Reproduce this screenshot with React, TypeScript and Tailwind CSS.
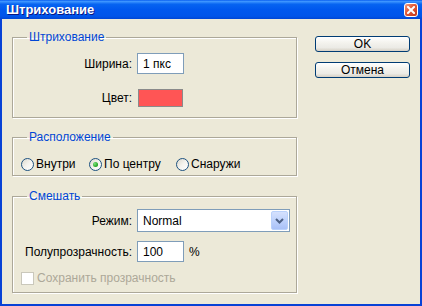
import React from "react"

// XP-style "Stroke" dialog (Photoshop, RU locale)

const ui = "font-['Liberation_Sans',Arial,sans-serif] text-[12px] leading-[14px]"

function Group({ title, className, children }: { title: string; className: string; children: React.ReactNode }) {
  return (
    <fieldset
      className={`border border-[#ACA899] shadow-[inset_1px_1px_0_#fff,1px_1px_0_#fff] ${className}`}
    >
      <legend className="ml-[14px] px-[2px] text-[#0046D5] leading-[14px]">{title}</legend>
      {children}
    </fieldset>
  )
}

function XpButton({ label }: { label: string }) {
  return (
    <button className="w-[95px] h-[16px] rounded-[3px] border border-[#003C74] bg-[linear-gradient(to_bottom,#ffffff_0%,#F4F3EE_40%,#ECEBE6_75%,#D6D0C5_100%)] text-black leading-[14px] text-center">
      {label}
    </button>
  )
}

function Radio({ label, checked }: { label: string; checked?: boolean }) {
  return (
    <div className="flex items-center">
      <span className="w-[13px] h-[13px] rounded-full border border-[#1C5180] bg-[linear-gradient(135deg,#DCD9CD_0%,#F4F3EE_50%,#ffffff_100%)] flex items-center justify-center">
        {checked && (
          <span className="w-[5px] h-[5px] rounded-full bg-[radial-gradient(circle_at_35%_35%,#7BE27B_0%,#21A121_70%)]" />
        )}
      </span>
      <span className="ml-[2px]">{label}</span>
    </div>
  )
}

export default function App() {
  return (
    <div className={`w-[422px] h-[306px] flex flex-col bg-[#0842D6] ${ui} text-black`}>
      {/* title bar */}
      <div className="h-[19px] flex items-center justify-between bg-[linear-gradient(to_bottom,#0A5FF0_0%,#3D95FF_8%,#0764F1_22%,#0058EE_50%,#0055EA_85%,#0046D5_100%)]">
        <span className="ml-[6px] text-white font-bold text-[13px] leading-[15px] [text-shadow:1px_1px_0_#0A1883]">
          Штрихование
        </span>
        <div className="mr-[4px] w-[14px] h-[14px] rounded-[3px] border border-white bg-[linear-gradient(135deg,#F0A187_0%,#E35D3B_40%,#C4361A_100%)] flex items-center justify-center">
          <svg width="8" height="8" viewBox="0 0 8 8">
            <path d="M1 1 L7 7 M7 1 L1 7" stroke="#fff" strokeWidth="2" strokeLinecap="square" />
          </svg>
        </div>
      </div>

      {/* body */}
      <div className="flex-1 mx-[2px] mb-[2px] bg-[#ECE9D8] flex pl-[10px] pt-[11px]">
        <div className="w-[285px] flex flex-col">
          <Group title="Штрихование" className="h-[88px]">
            <div className="grid grid-cols-[119px_auto] gap-x-[5px] items-center mt-[9px]">
              <span className="text-right">Ширина:</span>
              <div className="w-[47px] h-[21px] border border-[#7F9DB9] bg-white pl-[5px] flex items-center">1 пкс</div>
              <span className="text-right mt-[15px]">Цвет:</span>
              <div className="mt-[15px] ml-[1px] w-[45px] h-[18px] border border-[#8A8A8A] bg-[#FF5555]" />
            </div>
          </Group>

          <Group title="Расположение" className="h-[46px] mt-[12px]">
            <div className="flex mt-[13px] ml-[8px]">
              <div className="w-[68px]"><Radio label="Внутри" /></div>
              <div className="w-[87px]"><Radio label="По центру" checked /></div>
              <Radio label="Снаружи" />
            </div>
          </Group>

          <Group title="Смешать" className="h-[104px] mt-[13px]">
            <div className="grid grid-cols-[119px_auto] gap-x-[5px] items-center mt-[6px]">
              <span className="text-right">Режим:</span>
              <div className="w-[153px] h-[23px] border border-[#7F9DB9] bg-white flex items-center justify-between">
                <span className="ml-[5px]">Normal</span>
                <div className="mr-[1px] w-[17px] h-[19px] rounded-[2px] border border-[#B9D1FB] bg-[linear-gradient(to_bottom,#D5E1FD_0%,#BACFFB_60%,#A9C1F7_100%)] flex items-center justify-center">
                  <svg width="9" height="6" viewBox="0 0 9 6">
                    <path d="M1 1 L4.5 4.5 L8 1" stroke="#4D6185" strokeWidth="2" fill="none" />
                  </svg>
                </div>
              </div>
              <span className="text-right mt-[9px]">Полупрозрачность:</span>
              <div className="mt-[9px] flex items-center">
                <div className="w-[47px] h-[21px] border border-[#7F9DB9] bg-white pl-[5px] flex items-center">100</div>
                <span className="ml-[5px]">%</span>
              </div>
            </div>
            <div className="flex items-center mt-[9px] ml-[8px] text-[#ACA899]">
              <span className="w-[13px] h-[13px] border border-[#CAC8BB] bg-white" />
              <span className="ml-[3px]">Сохранить прозрачность</span>
            </div>
          </Group>
        </div>

        <div className="ml-[18px] mt-[6px] flex flex-col gap-[10px]">
          <XpButton label="OK" />
          <XpButton label="Отмена" />
        </div>
      </div>
    </div>
  )
}
